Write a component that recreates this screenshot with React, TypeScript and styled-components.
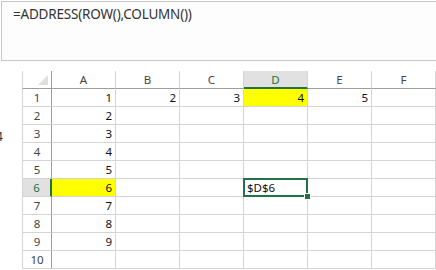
import React from "react";
import styled, { createGlobalStyle } from "styled-components";

const GlobalStyle = createGlobalStyle`
  body {
    margin: 0;
    background: #ffffff;
    font-family: "Noto Sans", "Open Sans", sans-serif;
    overflow: hidden;
  }
`;

const Page = styled.div`
  width: 436px;
  height: 270px;
  overflow: hidden;
  display: flex;
  flex-direction: column;
`;

const FormulaBox = styled.div`
  box-sizing: border-box;
  margin: 1px 0 0 1px;
  width: 460px;
  height: 60px;
  border: 1px solid #c6c6c6;
  background: #fdfdfd;
  padding: 3px 0 0 11px;
  font-size: 13.5px;
  color: #333;
  letter-spacing: -0.2px;
`;

const Sheet = styled.div`
  margin-top: 10px;
  display: grid;
  grid-template-columns: 22px 30px repeat(6, 64px);
  grid-auto-rows: 18px;
`;

const Gutter = styled.div`
  font-size: 12px;
  color: #333;
  line-height: 18px;
  margin-left: -4px;
  padding-top: 3px;
`;

const Corner = styled.div`
  box-sizing: border-box;
  position: relative;
  border-left: 1px solid #d4d4d4;
  border-right: 1px solid #9e9e9e;
  border-bottom: 1px solid #9e9e9e;
  &::after {
    content: "";
    position: absolute;
    right: 3px;
    bottom: 3px;
    width: 0;
    height: 0;
    border-left: 10px solid transparent;
    border-bottom: 10px solid #dfdfdf;
  }
`;

const ColHead = styled.div<{ $active?: boolean }>`
  box-sizing: border-box;
  border-right: 1px solid #d4d4d4;
  border-bottom: ${(p) => (p.$active ? "2px solid #217346" : "1px solid #9e9e9e")};
  background: ${(p) => (p.$active ? "#e1e1e1" : "#fff")};
  color: ${(p) => (p.$active ? "#217346" : "#444")};
  font-size: 11.5px;
  text-align: center;
  line-height: 17px;
`;

const RowHead = styled.div<{ $active?: boolean }>`
  box-sizing: border-box;
  border-left: 1px solid #d4d4d4;
  border-right: ${(p) => (p.$active ? "2px solid #217346" : "1px solid #9e9e9e")};
  border-bottom: 1px solid #d4d4d4;
  background: ${(p) => (p.$active ? "#e1e1e1" : "#fff")};
  color: ${(p) => (p.$active ? "#217346" : "#444")};
  font-size: 11.5px;
  text-align: center;
  line-height: 17px;
`;

const Cell = styled.div<{ $fill?: boolean; $selected?: boolean }>`
  box-sizing: border-box;
  position: relative;
  z-index: ${(p) => (p.$selected ? 2 : "auto")};
  border-right: 1px solid #d4d4d4;
  border-bottom: 1px solid #d4d4d4;
  background: ${(p) => (p.$fill ? "#ffff00" : "#fff")};
  color: #111;
  font-size: 11.5px;
  line-height: 17px;
  text-align: ${(p) => (p.$selected ? "left" : "right")};
  padding: 0 3px 0 3px;
  white-space: nowrap;
`;

const Selection = styled.div`
  position: absolute;
  left: -1px;
  top: -1px;
  right: -1px;
  bottom: -1px;
  border: 2px solid #217346;
  pointer-events: none;
`;

const Handle = styled.div`
  position: absolute;
  right: -5px;
  bottom: -5px;
  width: 5px;
  height: 5px;
  background: #217346;
  border: 1px solid #fff;
`;

const cols = ["A", "B", "C", "D", "E", "F"];

const values: Record<string, string> = {
  A1: "1",
  A2: "2",
  A3: "3",
  A4: "4",
  A5: "5",
  A6: "6",
  A7: "7",
  A8: "8",
  A9: "9",
  B1: "2",
  C1: "3",
  D1: "4",
  E1: "5",
  D6: "$D$6",
};

const filled = ["A6", "D1"];

export default function App() {
  const rows = Array.from({ length: 10 }, (_, i) => i + 1);

  return (
    <Page>
      <GlobalStyle />
      <FormulaBox>=ADDRESS(ROW(),COLUMN())</FormulaBox>
      <Sheet>
        <Gutter />
        <Corner />
        {cols.map((c) => (
          <ColHead key={c} $active={c === "D"}>
            {c}
          </ColHead>
        ))}
        {rows.map((r) => (
          <React.Fragment key={r}>
            <Gutter>{r === 3 ? "4" : ""}</Gutter>
            <RowHead $active={r === 6}>{r}</RowHead>
            {cols.map((c) => {
              const id = c + r;
              return (
                <Cell key={id} $fill={filled.includes(id)} $selected={id === "D6"}>
                  {values[id]}
                  {id === "D6" && (
                    <Selection>
                      <Handle />
                    </Selection>
                  )}
                </Cell>
              );
            })}
          </React.Fragment>
        ))}
      </Sheet>
    </Page>
  );
}
